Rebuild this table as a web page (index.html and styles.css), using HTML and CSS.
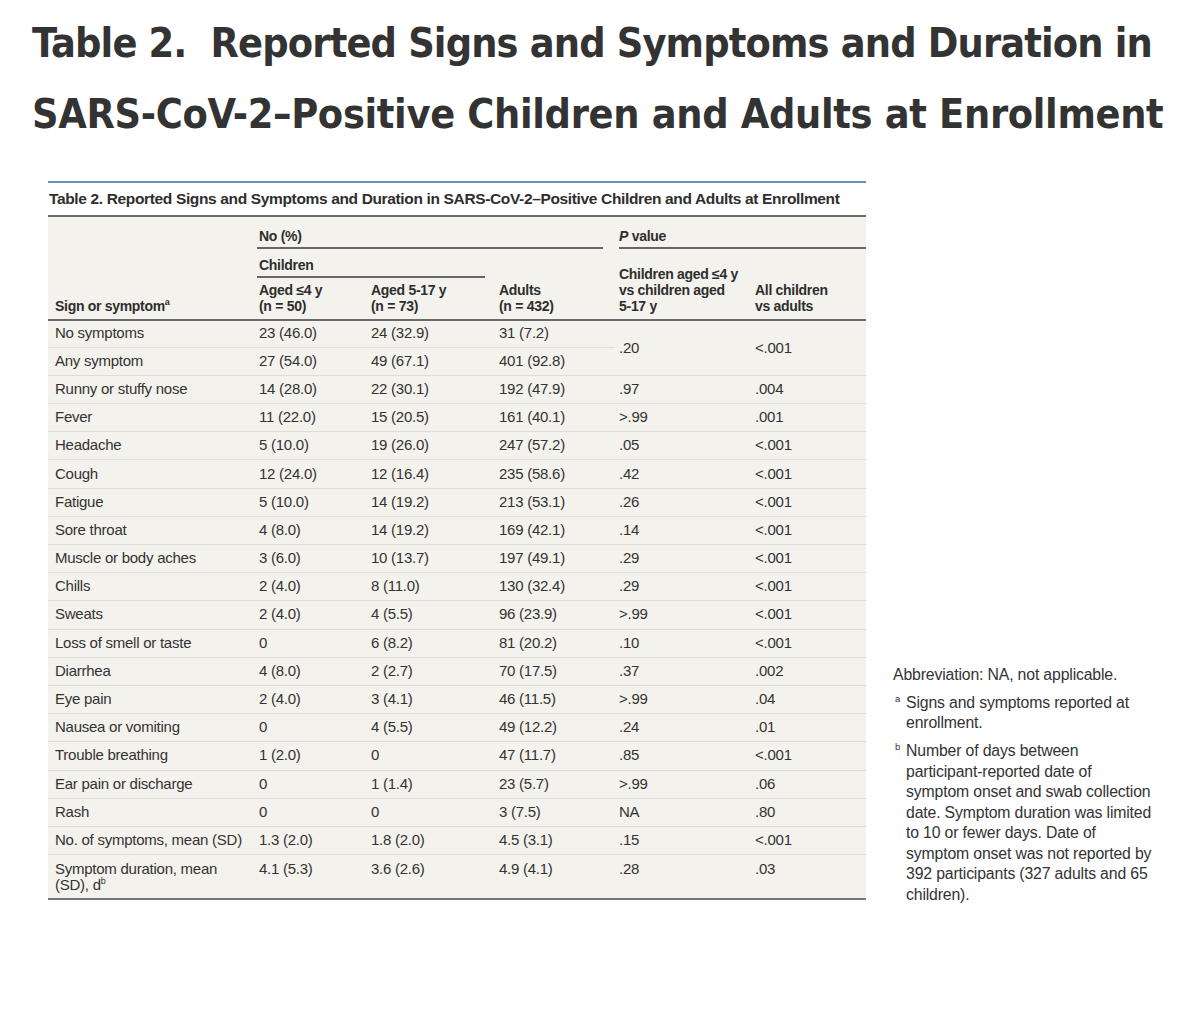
FILE: index.html
```html
<!DOCTYPE html>
<html>
<head>
<meta charset="utf-8">
<link rel="stylesheet" href="styles.css">
</head>
<body>
<h1 class="title"><span class="tl tl1">Table 2.&nbsp; Reported Signs and Symptoms and Duration in</span><span class="tl tl2">SARS-CoV-2–Positive Children and Adults at Enrollment</span></h1>
<div class="content">
  <div class="tablewrap">
    <div class="caption">Table 2. Reported Signs and Symptoms and Duration in SARS-CoV-2–Positive Children and Adults at Enrollment</div>
    <table class="data">
      <colgroup>
        <col class="c1"><col class="c2"><col class="c3"><col class="c4"><col class="c5"><col class="c6">
      </colgroup>
      <thead>
        <tr class="h1">
          <th></th>
          <th colspan="3" class="grp"><div class="ul">No (%)</div></th>
          <th colspan="2" class="grp last"><div class="ul"><i>P</i> value</div></th>
        </tr>
        <tr class="h2">
          <th></th>
          <th colspan="2" class="grp"><div class="ul">Children</div></th>
          <th></th>
          <th rowspan="2" class="pv">Children aged ≤4 y<br>vs children aged<br>5-17 y</th>
          <th rowspan="2" class="pv">All children<br>vs adults</th>
        </tr>
        <tr class="h3">
          <th class="first">Sign or symptom<sup>a</sup></th>
          <th>Aged ≤4 y<br>(n = 50)</th>
          <th>Aged 5-17 y<br>(n = 73)</th>
          <th>Adults<br>(n = 432)</th>
        </tr>
      </thead>
      <tbody>
        <tr class="firstrow"><td>No symptoms</td><td>23 (46.0)</td><td>24 (32.9)</td><td>31 (7.2)</td><td rowspan="2">.20</td><td rowspan="2">&lt;.001</td></tr>
        <tr><td>Any symptom</td><td>27 (54.0)</td><td>49 (67.1)</td><td>401 (92.8)</td></tr>
        <tr><td>Runny or stuffy nose</td><td>14 (28.0)</td><td>22 (30.1)</td><td>192 (47.9)</td><td>.97</td><td>.004</td></tr>
        <tr><td>Fever</td><td>11 (22.0)</td><td>15 (20.5)</td><td>161 (40.1)</td><td>&gt;.99</td><td>.001</td></tr>
        <tr><td>Headache</td><td>5 (10.0)</td><td>19 (26.0)</td><td>247 (57.2)</td><td>.05</td><td>&lt;.001</td></tr>
        <tr><td>Cough</td><td>12 (24.0)</td><td>12 (16.4)</td><td>235 (58.6)</td><td>.42</td><td>&lt;.001</td></tr>
        <tr><td>Fatigue</td><td>5 (10.0)</td><td>14 (19.2)</td><td>213 (53.1)</td><td>.26</td><td>&lt;.001</td></tr>
        <tr><td>Sore throat</td><td>4 (8.0)</td><td>14 (19.2)</td><td>169 (42.1)</td><td>.14</td><td>&lt;.001</td></tr>
        <tr><td>Muscle or body aches</td><td>3 (6.0)</td><td>10 (13.7)</td><td>197 (49.1)</td><td>.29</td><td>&lt;.001</td></tr>
        <tr><td>Chills</td><td>2 (4.0)</td><td>8 (11.0)</td><td>130 (32.4)</td><td>.29</td><td>&lt;.001</td></tr>
        <tr><td>Sweats</td><td>2 (4.0)</td><td>4 (5.5)</td><td>96 (23.9)</td><td>&gt;.99</td><td>&lt;.001</td></tr>
        <tr><td>Loss of smell or taste</td><td>0</td><td>6 (8.2)</td><td>81 (20.2)</td><td>.10</td><td>&lt;.001</td></tr>
        <tr><td>Diarrhea</td><td>4 (8.0)</td><td>2 (2.7)</td><td>70 (17.5)</td><td>.37</td><td>.002</td></tr>
        <tr><td>Eye pain</td><td>2 (4.0)</td><td>3 (4.1)</td><td>46 (11.5)</td><td>&gt;.99</td><td>.04</td></tr>
        <tr><td>Nausea or vomiting</td><td>0</td><td>4 (5.5)</td><td>49 (12.2)</td><td>.24</td><td>.01</td></tr>
        <tr><td>Trouble breathing</td><td>1 (2.0)</td><td>0</td><td>47 (11.7)</td><td>.85</td><td>&lt;.001</td></tr>
        <tr><td>Ear pain or discharge</td><td>0</td><td>1 (1.4)</td><td>23 (5.7)</td><td>&gt;.99</td><td>.06</td></tr>
        <tr><td>Rash</td><td>0</td><td>0</td><td>3 (7.5)</td><td>NA</td><td>.80</td></tr>
        <tr><td>No. of symptoms, mean (SD)</td><td>1.3 (2.0)</td><td>1.8 (2.0)</td><td>4.5 (3.1)</td><td>.15</td><td>&lt;.001</td></tr>
        <tr class="lastrow"><td>Symptom duration, mean<br>(SD), d<sup>b</sup></td><td>4.1 (5.3)</td><td>3.6 (2.6)</td><td>4.9 (4.1)</td><td>.28</td><td>.03</td></tr>
      </tbody>
    </table>
  </div>
  <div class="notes">
    <p>Abbreviation: NA, not applicable.</p>
    <p class="fn"><sup>a</sup>Signs and symptoms reported at<br>enrollment.</p>
    <p class="fn"><sup>b</sup>Number of days between<br>participant-reported date of<br>symptom onset and swab collection<br>date. Symptom duration was limited<br>to 10 or fewer days. Date of<br>symptom onset was not reported by<br>392 participants (327 adults and 65<br>children).</p>
  </div>
</div>
</body>
</html>
```
FILE: styles.css
```css
html, body {
  margin: 0;
  padding: 0;
  background: #ffffff;
}
body {
  color: #333333;
  font-family: "Liberation Sans", Arial, sans-serif;
  min-height: 1010px;
}
.title {
  margin: 0;
  padding: 8px 0 0 32px;
  font-family: "DejaVu Sans Condensed", "DejaVu Sans", sans-serif;
  font-weight: bold;
  font-size: 41px;
  line-height: 70.5px;
  color: #333333;
  white-space: nowrap;
}
.tl { display: block; }
.tl1 { letter-spacing: -0.85px; }
.tl2 { letter-spacing: -0.33px; }
.content {
  display: flex;
  align-items: flex-end;
  padding: 32px 0 30px 48px;
}
.tablewrap {
  width: 818px;
  flex: none;
  border-top: 2px solid #5e98b9;
}
.caption {
  font-size: 15.5px;
  font-weight: bold;
  letter-spacing: -0.35px;
  color: #2e2e2e;
  line-height: 20px;
  padding: 6px 0 6px 1px;
  border-bottom: 2px solid #6b6b6b;
  white-space: nowrap;
}
.data {
  width: 818px;
  table-layout: fixed;
  border-collapse: separate;
  border-spacing: 0;
  background: #f3f2ec;
  color: #333333;
  border-bottom: 2px solid #777777;
}
col.c1 { width: 207px; }
col.c2 { width: 112px; }
col.c3 { width: 128px; }
col.c4 { width: 120px; }
col.c5 { width: 136px; }
col.c6 { width: 115px; }
.data th {
  box-sizing: border-box;
  text-align: left;
  font-size: 14px;
  font-weight: bold;
  letter-spacing: -0.3px;
  line-height: 16px;
  padding: 0 0 0 4px;
  vertical-align: bottom;
  color: #2e2e2e;
}
.data th.first { padding-left: 7px; }
.data sup {
  font-size: 9px;
  line-height: 0;
}
.data tr.h1 th { height: 32px; }
.data tr.h1 th.grp { padding: 0 12px 0 2px; }
.data tr.h1 th.grp.last { padding-right: 0; padding-left: 4px; }
.data tr.h2 th { height: 29px; }
.data tr.h2 th.grp { padding: 0 10px 0 2px; }
.data .ul {
  border-bottom: 2px solid #666666;
  padding: 0 0 3px 2px;
}
.data tr.h1 th.last .ul { padding-left: 0; }
.data tr.h3 th, .data th.pv {
  padding-bottom: 5px;
  border-bottom: 2px solid #6b6b6b;
}
.data tr.h3 th { height: 43px; }
.data tr.h3 th.first { padding-left: 7px; }
.data td {
  box-sizing: border-box;
  height: 28.2px;
  padding: 0 0 1px 4px;
  font-size: 15px;
  letter-spacing: -0.25px;
  line-height: 16px;
  border-top: 1px solid #dedcd4;
  vertical-align: middle;
}
.data tr.firstrow td {
  border-top: none;
  height: 25.7px;
  padding-bottom: 2px;
}
.data tr.firstrow td[rowspan] {
  padding-bottom: 0;
}
.data td:first-child { padding-left: 7px; }
.data tr.lastrow td {
  height: 44px;
  vertical-align: top;
  padding-top: 6px;
}
.notes {
  flex: none;
  width: 280px;
  margin: 0 0 -5px 27px;
  font-size: 15.8px;
  line-height: 20.5px;
  color: #333333;
  letter-spacing: -0.15px;
  white-space: nowrap;
}
.notes p {
  margin: 0 0 7.5px 0;
}
.notes p:last-child { margin-bottom: 0; }
.notes p.fn {
  padding-left: 13px;
  text-indent: -13px;
}
.notes sup {
  display: inline-block;
  box-sizing: border-box;
  width: 13px;
  padding-left: 2px;
  text-indent: 0;
  font-size: 9.5px;
  line-height: 0;
  vertical-align: 6px;
}
```
